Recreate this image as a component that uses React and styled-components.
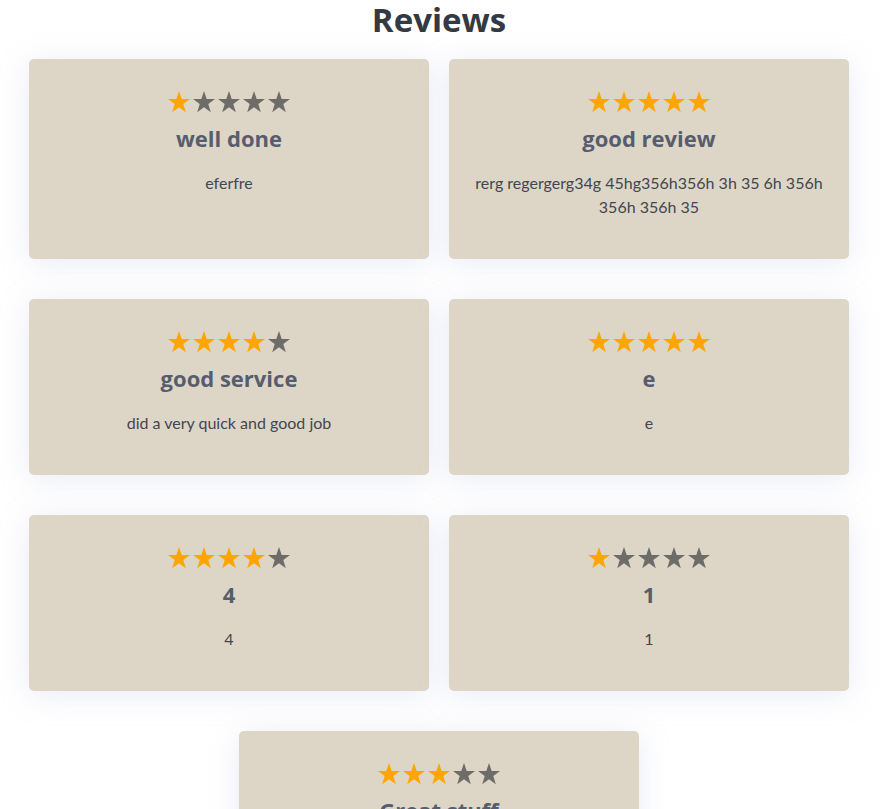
import React from 'react';
import styled, { createGlobalStyle } from 'styled-components';

const GlobalStyle = createGlobalStyle`
  body {
    margin: 0;
    background: #ffffff;
    font-family: Lato, "Open Sans", sans-serif;
  }
`;

const Page = styled.div`
  display: flex;
  flex-direction: column;
  align-items: center;
  padding-right: 3px;
`;

const Heading = styled.h1`
  margin: 0;
  font-family: "Open Sans", "Noto Sans", sans-serif;
  font-size: 33px;
  line-height: 39px;
  font-weight: 700;
  color: #353942;
`;

const CardGrid = styled.div`
  display: flex;
  flex-wrap: wrap;
  justify-content: center;
  width: 100%;
`;

const Card = styled.div`
  width: 400px;
  box-sizing: border-box;
  margin: 20px 10px;
  padding: 31px 20px 31px;
  background: #ddd6c6;
  border-radius: 5px;
  box-shadow: 0 4px 30px rgba(170, 180, 215, 0.25);
  text-align: center;
`;

const StarRow = styled.div`
  display: flex;
  justify-content: center;
  gap: 1px;
  height: 24px;
`;

const StarIcon = styled.svg`
  width: 24px;
  height: 24px;
  fill: ${(p) => (p.$on ? '#ffa500' : '#6e6c68')};
`;

const Title = styled.h3`
  margin: 9px 0 0;
  font-family: "Open Sans", "Noto Sans", sans-serif;
  font-size: 22px;
  font-weight: 700;
  color: #575d6d;
`;

const Body = styled.p`
  margin: 18px 0 9px;
  font-size: 16px;
  line-height: 24px;
  color: #414652;
`;

const Star = ({ on }) => (
  <StarIcon $on={on} viewBox="0 0 24 24">
    <polygon points="12,1 14.7,9 23,9 16.3,14 18.8,22.2 12,17.2 5.2,22.2 7.7,14 1,9 9.3,9" />
  </StarIcon>
);

const reviews = [
  { rating: 1, title: 'well done', text: 'eferfre' },
  { rating: 5, title: 'good review', text: 'rerg regergerg34g 45hg356h356h 3h 35 6h 356h 356h 356h 35' },
  { rating: 4, title: 'good service', text: 'did a very quick and good job' },
  { rating: 5, title: 'e', text: 'e' },
  { rating: 4, title: '4', text: '4' },
  { rating: 1, title: '1', text: '1' },
  { rating: 3, title: 'Great stuff', text: 'really happy with the work' },
];

const App = () => (
  <>
    <GlobalStyle />
    <Page>
      <Heading>Reviews</Heading>
      <CardGrid>
        {reviews.map((r, i) => (
          <Card key={i}>
            <StarRow>
              {[1, 2, 3, 4, 5].map((n) => (
                <Star key={n} on={n <= r.rating} />
              ))}
            </StarRow>
            <Title>{r.title}</Title>
            <Body>{r.text}</Body>
          </Card>
        ))}
      </CardGrid>
    </Page>
  </>
);

export default App;
